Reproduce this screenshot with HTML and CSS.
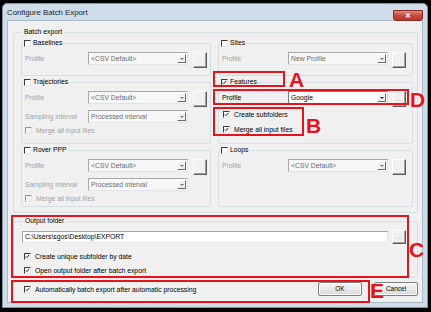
FILE: index.html
```html
<!DOCTYPE html>
<html>

<head>
  <meta charset="utf-8">
  <meta content="width=device-width, initial-scale=1">
  <link rel="stylesheet" href="styles.css">
</head>

<body>
  <div class="window">
    <div class="titlebar">
      <span class="title">Configure Batch Export</span>
      <span class="close">&#x2715;</span>
    </div>

    <div class="client">
      <fieldset class="batch">
        <legend>Batch export</legend>
        <div class="groups">

          <fieldset class="group">
            <legend><span class="cb"></span>Baselines</legend>
            <div class="field first">
              <span class="lbl off">Profile</span>
              <span class="combo off">&lt;CSV Default&gt;<i class="arrow"></i></span>
              <span class="dots"></span>
            </div>
          </fieldset>

          <fieldset class="group right">
            <legend><span class="cb"></span>Sites</legend>
            <div class="field first">
              <span class="lbl off">Profile</span>
              <span class="combo off">New Profile<i class="arrow"></i></span>
              <span class="dots"></span>
            </div>
          </fieldset>

          <fieldset class="group">
            <legend><span class="cb"></span>Trajectories</legend>
            <div class="field first">
              <span class="lbl off">Profile</span>
              <span class="combo off">&lt;CSV Default&gt;<i class="arrow"></i></span>
              <span class="dots"></span>
            </div>
            <div class="field">
              <span class="lbl off">Sampling interval</span>
              <span class="combo off">Processed interval<i class="arrow"></i></span>
            </div>
            <div class="check off merge"><span class="cb off"></span>Merge all input files</div>
          </fieldset>

          <fieldset class="group right">
            <legend><span class="cb on"><svg viewBox="0 0 7 7"><path d="M1.2 3.4l1.6 1.7 3.1-3.9"/></svg></span>Features</legend>
            <div class="field first">
              <span class="lbl">Profile</span>
              <span class="combo">Google<i class="arrow"></i></span>
              <span class="dots">...</span>
            </div>
            <div class="check sub"><span class="cb on"><svg viewBox="0 0 7 7"><path d="M1.2 3.4l1.6 1.7 3.1-3.9"/></svg></span>Create subfolders</div>
            <div class="check sub merge"><span class="cb on"><svg viewBox="0 0 7 7"><path d="M1.2 3.4l1.6 1.7 3.1-3.9"/></svg></span>Merge all input files</div>
          </fieldset>

          <fieldset class="group">
            <legend><span class="cb"></span>Rover PPP</legend>
            <div class="field first">
              <span class="lbl off">Profile</span>
              <span class="combo off">&lt;CSV Default&gt;<i class="arrow"></i></span>
              <span class="dots"></span>
            </div>
            <div class="field">
              <span class="lbl off">Sampling interval</span>
              <span class="combo off">Processed interval<i class="arrow"></i></span>
            </div>
            <div class="check off merge"><span class="cb off"></span>Merge all input files</div>
          </fieldset>

          <fieldset class="group right">
            <legend><span class="cb"></span>Loops</legend>
            <div class="field first">
              <span class="lbl off">Profile</span>
              <span class="combo off">&lt;CSV Default&gt;<i class="arrow"></i></span>
              <span class="dots"></span>
            </div>
          </fieldset>

        </div>
      </fieldset>

      <fieldset class="output">
        <legend>Output folder</legend>
        <div class="path-row">
          <span class="textbox">C:\Users\sgos\Desktop\EXPORT</span>
          <span class="dots">...</span>
        </div>
        <div class="check unique"><span class="cb on"><svg viewBox="0 0 7 7"><path d="M1.2 3.4l1.6 1.7 3.1-3.9"/></svg></span>Create unique subfolder by date</div>
        <div class="check open"><span class="cb on"><svg viewBox="0 0 7 7"><path d="M1.2 3.4l1.6 1.7 3.1-3.9"/></svg></span>Open output folder after batch export</div>
      </fieldset>

      <div class="footer">
        <div class="check"><span class="cb on"><svg viewBox="0 0 7 7"><path d="M1.2 3.4l1.6 1.7 3.1-3.9"/></svg></span>Automatically batch export after automatic processing</div>
        <span class="btn ok">OK</span>
        <span class="btn">Cancel</span>
      </div>
    </div>
  </div>

  <!-- annotation overlay -->
  <div class="mark box-a"></div>
  <div class="mark box-d"></div>
  <div class="mark box-b"></div>
  <div class="mark box-c"></div>
  <div class="mark box-e"></div>
  <span class="letter let-a">A</span>
  <span class="letter let-b">B</span>
  <span class="letter let-c">C</span>
  <span class="letter let-d">D</span>
  <span class="letter let-e">E</span>
</body>

</html>
```

FILE: styles.css
```css
body {
  margin: 0;
  width: 431px;
  height: 312px;
  background: #000;
  font-family: "Liberation Sans", Arial, sans-serif;
  font-size: 6.8px;
  color: #000;
  overflow: hidden;
}

.window {
  box-sizing: border-box;
  width: 426px;
  height: 305px;
  margin: 3px 0 0 2px;
  padding: 0 5px;
  background: #cfdcea;
  border: 1px solid #8192a8;
  border-radius: 5px 5px 0 0;
}

.titlebar {
  display: flex;
  justify-content: space-between;
  align-items: flex-start;
  height: 17px;
  margin: 0 -1px 0 -1px;
}

.title {
  font-size: 7.8px;
  line-height: 17px;
  color: #1e1e1e;
}

.close {
  width: 30px;
  height: 11px;
  margin-top: 6px;
  box-sizing: border-box;
  border: 1px solid #8a2b24;
  border-radius: 0 0 3px 3px;
  background: linear-gradient(#dd8a80, #c74a3e 50%, #b8352a);
  color: #fff;
  font-size: 7px;
  line-height: 9px;
  text-align: center;
  font-weight: bold;
}

.client {
  box-sizing: border-box;
  height: 281px;
  padding: 6px 4px 0 5px;
  background: #f0f0f0;
  box-shadow: 0 0 0 1px #aab8c8;
}

fieldset {
  margin: 0;
  padding: 0;
  min-width: 0;
  border: 1px solid #d5dce2;
  border-radius: 2px;
}

legend {
  display: flex;
  align-items: center;
  height: 10px;
  line-height: 10px;
  margin-left: 1px;
  padding: 0 2px;
}

.batch {
  padding: 1px 4px 5px 7px;
}

.groups {
  display: grid;
  grid-template-columns: 190px 195px;
  grid-template-rows: 38px 67px 62px;
  gap: 1px 7px;
}

.group legend {
  padding: 0 1px;
}

.field {
  display: flex;
  align-items: flex-start;
  height: 13px;
  padding-left: 3px;
  margin-top: 3px;
}

.field.first {
  height: 16px;
  margin-top: 4px;
}

.lbl {
  width: 63px;
  line-height: 13px;
  white-space: nowrap;
}

.right .lbl {
  width: 66px;
}

.off {
  color: #a3a3a3;
}

.combo {
  display: flex;
  align-items: center;
  justify-content: space-between;
  box-sizing: border-box;
  width: 100px;
  height: 13px;
  padding-left: 2px;
  background: #fff;
  border: 1px solid #7a7a7a;
  border-right-color: #dcdcdc;
  border-bottom-color: #dcdcdc;
  white-space: nowrap;
}

.combo.off {
  color: #6d6d6d;
  background: #f7f7f7;
  border-color: #a9a9a9 #e3e3e3 #e3e3e3 #a9a9a9;
}

.arrow {
  position: relative;
  box-sizing: border-box;
  width: 9px;
  height: 9px;
  margin-right: 1px;
  background: #f0f0f0;
  border: 1px solid;
  border-color: #fff #6a6a6a #6a6a6a #fff;
}

.arrow:after {
  content: "";
  position: absolute;
  left: 1.5px;
  top: 2.5px;
  border: 2px solid transparent;
  border-top: 2px solid #222;
}

.combo.off .arrow:after {
  border-top-color: #777;
}

.dots {
  box-sizing: border-box;
  width: 14px;
  height: 16px;
  margin-left: 5px;
  background: #f0f0f0;
  border: 1px solid;
  border-color: #fff #5e5e5e #5e5e5e #fff;
  box-shadow: inset -1px -1px 0 #a0a0a0;
  color: #8a8a8a;
  font-size: 6px;
  line-height: 14px;
  text-align: center;
}

.right .dots {
  margin-left: 4px;
}

.check {
  display: flex;
  align-items: center;
  height: 10px;
  white-space: nowrap;
}

.cb {
  display: inline-block;
  box-sizing: border-box;
  width: 7px;
  height: 7px;
  margin-right: 2px;
  background: #fff;
  border: 1px solid;
  border-color: #3c3c3c #e6e6e6 #e6e6e6 #3c3c3c;
}

.check .cb {
  margin-right: 4px;
}

.cb.off {
  background: #f3f3f3;
  border-color: #9a9a9a #e6e6e6 #e6e6e6 #9a9a9a;
}

.cb svg {
  display: block;
  width: 5px;
  height: 5px;
}

.cb svg path {
  fill: none;
  stroke: #111;
  stroke-width: 1.3;
}

.group .check {
  padding-left: 3px;
}

.group .merge {
  margin-top: 2px;
}

.group .sub {
  padding-left: 4px;
  margin-top: 2px;
}

.group .sub.merge {
  margin-top: 5px;
}

.output {
  margin-top: 3px;
  height: 62px;
  box-sizing: border-box;
  padding: 4px 0 0 8px;
}

.path-row {
  display: flex;
  align-items: center;
  height: 14px;
}

.textbox {
  box-sizing: border-box;
  width: 366px;
  height: 12px;
  padding-left: 2px;
  line-height: 10px;
  background: #fff;
  border: 1px solid;
  border-color: #a5a5a5 #e3e9ef #e3e9ef #a5a5a5;
}

.path-row .dots {
  width: 14px;
  height: 14px;
  margin-left: 4px;
  line-height: 12px;
}

.output .check {
  padding-left: 2px;
}

.unique {
  margin-top: 7px;
}

.open {
  margin-top: 4px;
}

.footer {
  display: flex;
  align-items: center;
  gap: 12px;
  height: 14px;
  margin-top: 4px;
  padding-left: 11px;
}

.footer .check {
  flex: 1;
}

.btn {
  box-sizing: border-box;
  width: 44px;
  height: 14px;
  border: 1px solid #7e7e7e;
  border-radius: 2px;
  background: linear-gradient(#f7f7f7, #e9e9e9 50%, #d9d9d9);
  box-shadow: inset 0 0 0 1px #fbfbfb;
  font-size: 6.5px;
  line-height: 12px;
  text-align: center;
}

/* red annotations drawn over the dialog */
.mark {
  position: absolute;
  box-sizing: border-box;
  border: 2px solid #e5141c;
}

.box-a { left: 213px; top: 71px; width: 72px; height: 16px; }
.box-d { left: 213px; top: 89px; width: 196px; height: 16px; }
.box-b { left: 213px; top: 107px; width: 91px; height: 29px; }
.box-c { left: 11px; top: 215px; width: 398px; height: 63px; }
.box-e { left: 11px; top: 280px; width: 359px; height: 23px; }

.letter {
  position: absolute;
  font-family: "Liberation Sans", Arial, sans-serif;
  font-weight: bold;
  font-size: 21px;
  line-height: 1;
  color: #e5141c;
}

.let-a { left: 289px; top: 69px; }
.let-b { left: 306px; top: 115px; }
.let-c { left: 409px; top: 239px; }
.let-d { left: 410px; top: 89px; }
.let-e { left: 370px; top: 280px; }
```
